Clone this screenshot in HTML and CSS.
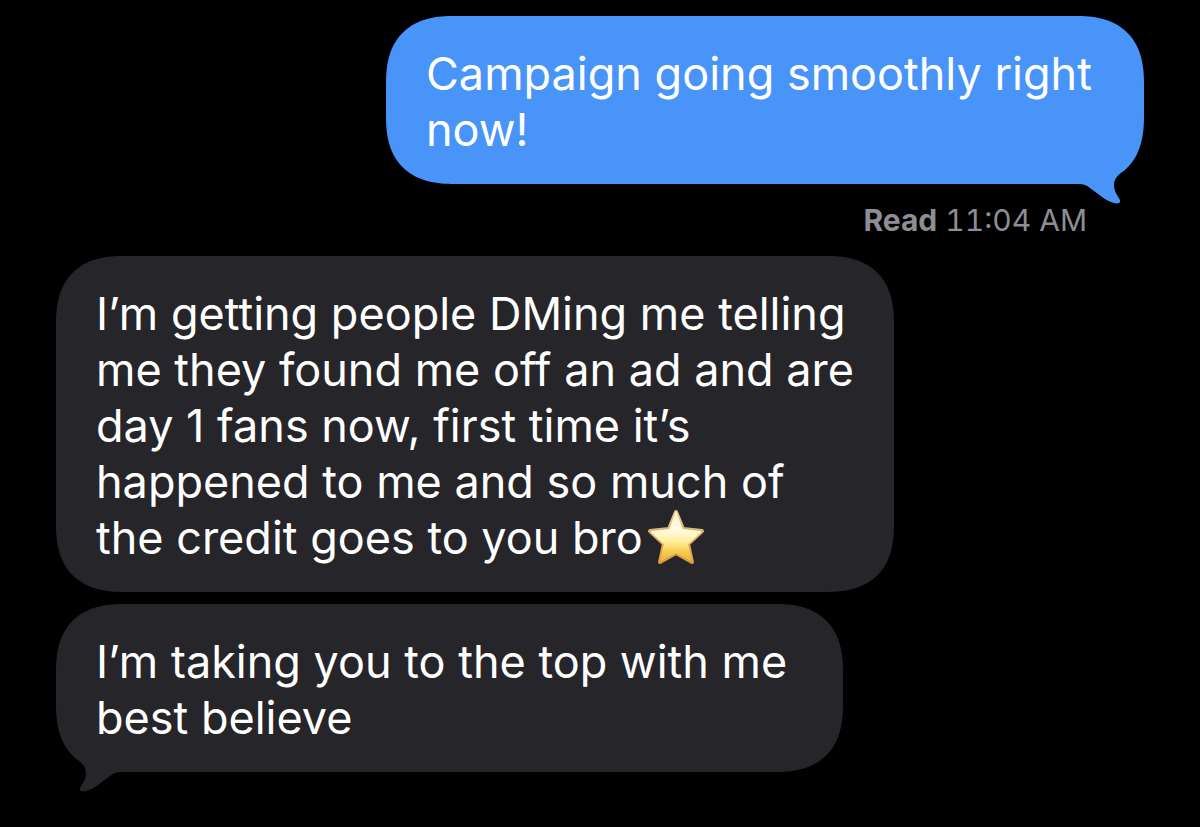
FILE: index.html
```html
<!DOCTYPE html>
<html lang="en">
<head>
	<meta charset="utf-8" />
	<title>Messages</title>
	<link rel="stylesheet" href="styles.css">
</head>
<body>
	<main class="thread">
		<div class="bubble sent">
			<p>Campaign going smoothly right now!</p>
			<svg class="tail" viewBox="0 0 70 60" aria-hidden="true"><path d="M66 0C64 10 60 17 51 26C45 30 40 34 40 41C40 48 44 52 46 56C47 59 44 60 40 59C32 57 24 50 16 44C12 41 10 40 4 40L30 0Z" /></svg>
		</div>
		<p class="receipt"><b>Read</b> 11:04 AM</p>
		<div class="bubble received">
			<p>I’m getting people DMing me telling me they found me off an ad and are day 1 fans now, first time it’s happened to me and so much of the credit goes to you bro<svg class="star" viewBox="0 0 60 58" role="img" aria-label="star">
				<defs>
					<linearGradient id="edge" x1="0" y1="0" x2="0" y2="1">
						<stop offset="0" stop-color="#dfc58c" />
						<stop offset="0.5" stop-color="#dcb26a" />
						<stop offset="1" stop-color="#d99a35" />
					</linearGradient>
					<linearGradient id="gold" x1="0" y1="0" x2="0" y2="1">
						<stop offset="0" stop-color="#fff1cf" />
						<stop offset="0.35" stop-color="#fffbe6" />
						<stop offset="0.6" stop-color="#fff0a0" />
						<stop offset="0.8" stop-color="#f8cf55" />
						<stop offset="1" stop-color="#eeb445" />
					</linearGradient>
				</defs>
				<path fill="url(#edge)" stroke="url(#edge)" stroke-width="4" stroke-linejoin="round" d="M30 4L37 21L56 23L42 36L46 54L30 45L14 54L18 36L4 23L23 21Z" />
				<path fill="url(#gold)" stroke="url(#gold)" stroke-width="2" stroke-linejoin="round" d="M30 5L36 22L54 24L41 36L45 52L30 44L15 52L19 36L6 24L24 22Z" />
			</svg></p>
		</div>
		<div class="bubble received last">
			<p>I’m taking you to the top with me best believe</p>
			<svg class="tail" viewBox="0 0 70 60" aria-hidden="true"><path d="M66 0C64 10 60 17 51 26C45 30 40 34 40 41C40 48 44 52 46 56C47 59 44 60 40 59C32 57 24 50 16 44C12 41 10 40 4 40L30 0Z" /></svg>
		</div>
	</main>
</body>
</html>
```
FILE: styles.css
```css
body {
	margin:0;
	background:#000;
	color:#fff;
	font-family:Inter, "Liberation Sans", sans-serif;
}
p {
	margin:0;
}
.thread {
	display:flex;
	flex-direction:column;
	align-items:flex-start;
	padding:16px 56px 48px;
}
.bubble {
	position:relative;
	box-sizing:border-box;
	padding:30px 40px 26px;
	border-radius:60px;
	font-size:45px;
	line-height:56px;
}
/* smoother corners where the browser has them */
@supports (corner-shape:superellipse(1.3)) {
	.bubble {
		border-radius:68px;
		corner-shape:superellipse(1.3);
	}
}
.sent {
	align-self:flex-end;
	max-width:758px;
	background:#4894f9;
}
.received {
	max-width:838px;
	background:#26252a;
}
.last {
	max-width:787px;
	margin-top:12px;
}
.receipt {
	align-self:flex-end;
	margin:16px 57px 16px 0;
	color:#8d8d93;
	font-size:30px;
	line-height:40px;
	font-variant-numeric:tabular-nums;
}
/*-------------------*/
.tail {
	position:absolute;
	right:0;
	bottom:-20px;
	width:70px;
	height:60px;
	fill:#4894f9;
}
.last .tail {
	right:auto;
	left:0;
	fill:#26252a;
	transform:scaleX(-1);
}
.star {
	width:60px;
	height:58px;
	margin:-8px 0 -8px 3px;
	vertical-align:-4px;
}
```
